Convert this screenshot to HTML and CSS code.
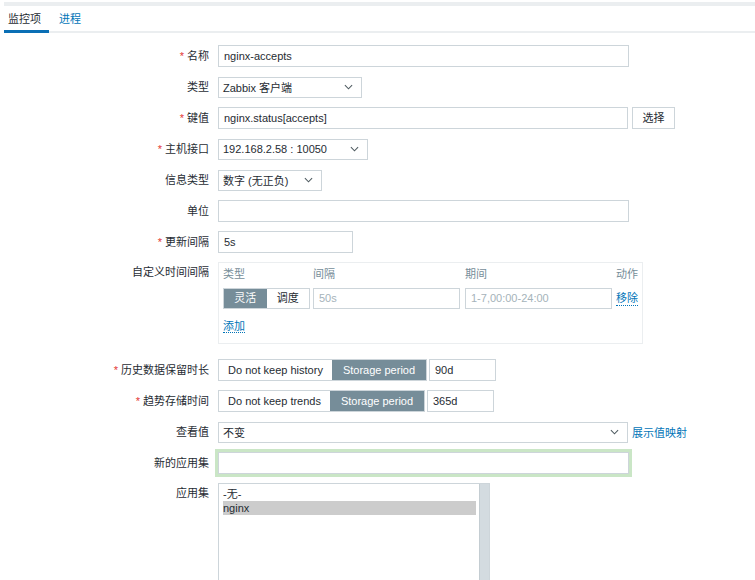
FILE: index.html
```html
<!DOCTYPE html>
<html lang="zh">
<head>
<meta charset="utf-8">
<title>监控项</title>
<link rel="stylesheet" href="styles.css">
</head>
<body>
<div class="page">
  <div class="topband"></div>
  <div class="tabs">
    <span class="tab active">监控项</span>
    <span class="tab link">进程</span>
    <span class="tab-rest"></span>
  </div>

  <div class="form">
    <div class="lbl"><span class="req">*</span> 名称</div>
    <div class="fld"><div class="input w411">nginx-accepts</div></div>

    <div class="lbl">类型</div>
    <div class="fld"><div class="select w144"><span>Zabbix 客户端</span><svg class="chev" viewBox="0 0 10 6"><polyline points="1,1 5,5 9,1"/></svg></div></div>

    <div class="lbl"><span class="req">*</span> 键值</div>
    <div class="fld"><div class="input w410">nginx.status[accepts]</div><div class="btn">选择</div></div>

    <div class="lbl"><span class="req">*</span> 主机接口</div>
    <div class="fld"><div class="select w150"><span>192.168.2.58 : 10050</span><svg class="chev" viewBox="0 0 10 6"><polyline points="1,1 5,5 9,1"/></svg></div></div>

    <div class="lbl">信息类型</div>
    <div class="fld"><div class="select w104"><span>数字 (无正负)</span><svg class="chev" viewBox="0 0 10 6"><polyline points="1,1 5,5 9,1"/></svg></div></div>

    <div class="lbl">单位</div>
    <div class="fld"><div class="input w411"></div></div>

    <div class="lbl"><span class="req">*</span> 更新间隔</div>
    <div class="fld"><div class="input w135">5s</div></div>

    <div class="lbl lbl-top">自定义时间间隔</div>
    <div class="fld fld-box">
      <div class="intervals">
        <div class="irow head">
          <span class="c1">类型</span>
          <span class="c2">间隔</span>
          <span class="c3">期间</span>
          <span class="c4">动作</span>
        </div>
        <div class="irow">
          <div class="c1 seg small"><span class="on">灵活</span><span>调度</span></div>
          <div class="c2 input ph">50s</div>
          <div class="c3 input ph">1-7,00:00-24:00</div>
          <span class="c4 dlink">移除</span>
        </div>
        <div class="addrow"><span class="dlink">添加</span></div>
      </div>
    </div>

    <div class="lbl"><span class="req">*</span> 历史数据保留时长</div>
    <div class="fld"><div class="seg"><span class="s114">Do not keep history</span><span class="on s94">Storage period</span></div><div class="input w67 ml2">90d</div></div>

    <div class="lbl"><span class="req">*</span> 趋势存储时间</div>
    <div class="fld"><div class="seg"><span class="s112">Do not keep trends</span><span class="on s94">Storage period</span></div><div class="input w67 ml2">365d</div></div>

    <div class="lbl">查看值</div>
    <div class="fld"><div class="select w410"><span>不变</span><svg class="chev" viewBox="0 0 10 6"><polyline points="1,1 5,5 9,1"/></svg></div><span class="link ml4">展示值映射</span></div>

    <div class="lbl">新的应用集</div>
    <div class="fld"><div class="input w411 focus"></div></div>

    <div class="lbl lbl-top2">应用集</div>
    <div class="fld">
      <div class="listbox">
        <div class="opts">
          <div class="opt">-无-</div>
          <div class="opt sel">nginx</div>
        </div>
        <div class="sbar"></div>
      </div>
    </div>
  </div>
</div>
</body>
</html>
```

FILE: styles.css
```css
* { box-sizing: border-box; }
html, body { margin: 0; padding: 0; background: #fff; }
body {
  font-family: "Liberation Sans", "Noto Sans CJK SC", sans-serif;
  font-size: 11px;
  color: #1f2c33;
  overflow: hidden;
}
.page { padding-top: 2px; }
.topband { height: 4px; margin-left: 4px; background: #ebeef0; }

.tabs {
  display: flex;
  align-items: flex-end;
  margin-top: 4px;
  padding-left: 4px;
  height: 23px;
}
.tab {
  height: 23px;
  line-height: 18px;
  padding: 0 4px;
  white-space: nowrap;
}
.tab.active { width: 45px; border-bottom: 3px solid #0a6fb5; color: #1f2c33; }
.tab.link { color: #0275b8; padding-left: 10px; padding-right: 4px; border-bottom: 2px solid #ebeef0; }
.tab-rest { flex: 1; height: 2px; background: #ebeef0; }

.form {
  display: grid;
  grid-template-columns: 209px 1fr;
  column-gap: 9px;
  row-gap: 9px;
  margin-top: 12px;
}
.lbl {
  text-align: right;
  line-height: 22px;
  height: 22px;
  white-space: nowrap;
}
.lbl-top { line-height: 20px; }
.lbl-top2 { line-height: 20px; }
.req { color: #e33734; }
.fld { display: flex; align-items: center; min-height: 22px; }

.input {
  height: 22px;
  border: 1px solid #cdd5da;
  background: #fff;
  padding: 0 5px;
  line-height: 20px;
  white-space: nowrap;
  overflow: hidden;
}
.input.ph { color: #a5b3ba; }
.input.focus { box-shadow: 0 0 0 3px #cae6c6; }
.w411 { width: 411px; }
.w410 { width: 410px; }
.w135 { width: 135px; }
.w67 { width: 67px; }
.w144 { width: 144px; }
.w150 { width: 150px; }
.w104 { width: 104px; }
.ml2 { margin-left: 2px; }
.ml4 { margin-left: 4px; }

.select {
  height: 21px;
  border: 1px solid #cdd5da;
  background: #fff;
  padding: 0 4px;
  display: flex;
  align-items: center;
  justify-content: space-between;
  white-space: nowrap;
}
.chev {
  width: 9px;
  height: 6px;
  margin-right: 4px;
  fill: none;
  stroke: #4f5b61;
  stroke-width: 1.2;
}

.btn {
  margin-left: 4px;
  width: 43px;
  height: 22px;
  border: 1px solid #cdd5da;
  background: #fff;
  text-align: center;
  line-height: 20px;
}

.link { color: #0275b8; white-space: nowrap; }
.dlink { color: #0275b8; border-bottom: 1px dotted #0275b8; line-height: 14px; white-space: nowrap; }

.fld-box { margin-bottom: 6px; align-items: flex-start; }
.intervals {
  width: 425px;
  height: 82px;
  border: 1px solid #ebeef0;
  padding: 4px 4px 0 4px;
}
.irow { display: flex; align-items: center; white-space: nowrap; }
.irow.head { height: 14px; line-height: 14px; margin-bottom: 7px; color: #768d99; }
.c1 { width: 87px; flex: none; }
.c2 { width: 147px; margin-left: 3px; flex: none; }
.c3 { width: 147px; margin-left: 5px; flex: none; }
.c4 { margin-left: 4px; flex: none; }
.irow .input { height: 21px; line-height: 19px; }
.addrow { margin-top: 10px; line-height: 14px; }

.seg {
  display: flex;
  height: 22px;
  border: 1px solid #cdd5da;
}
.seg span {
  display: block;
  line-height: 20px;
  text-align: center;
  white-space: nowrap;
  background: #fff;
}
.seg span.on { background: #768d99; color: #fff; }
.seg.small { height: 21px; }
.seg.small span { width: 43px; line-height: 19px; }
.s114 { width: 113px; }
.s112 { width: 111px; }
.s94 { width: 94px; }

.listbox {
  width: 272px;
  height: 110px;
  border: 1px solid #cdd5da;
  display: flex;
}
.opts { flex: 1; padding: 3px 3px 0 4px; }
.opt { line-height: 14px; height: 14px; }
.opt.sel { background: #cccccc; }
.sbar { width: 10px; background: #d3dbe0; border-left: 1px solid #c4cdd2; }
```
